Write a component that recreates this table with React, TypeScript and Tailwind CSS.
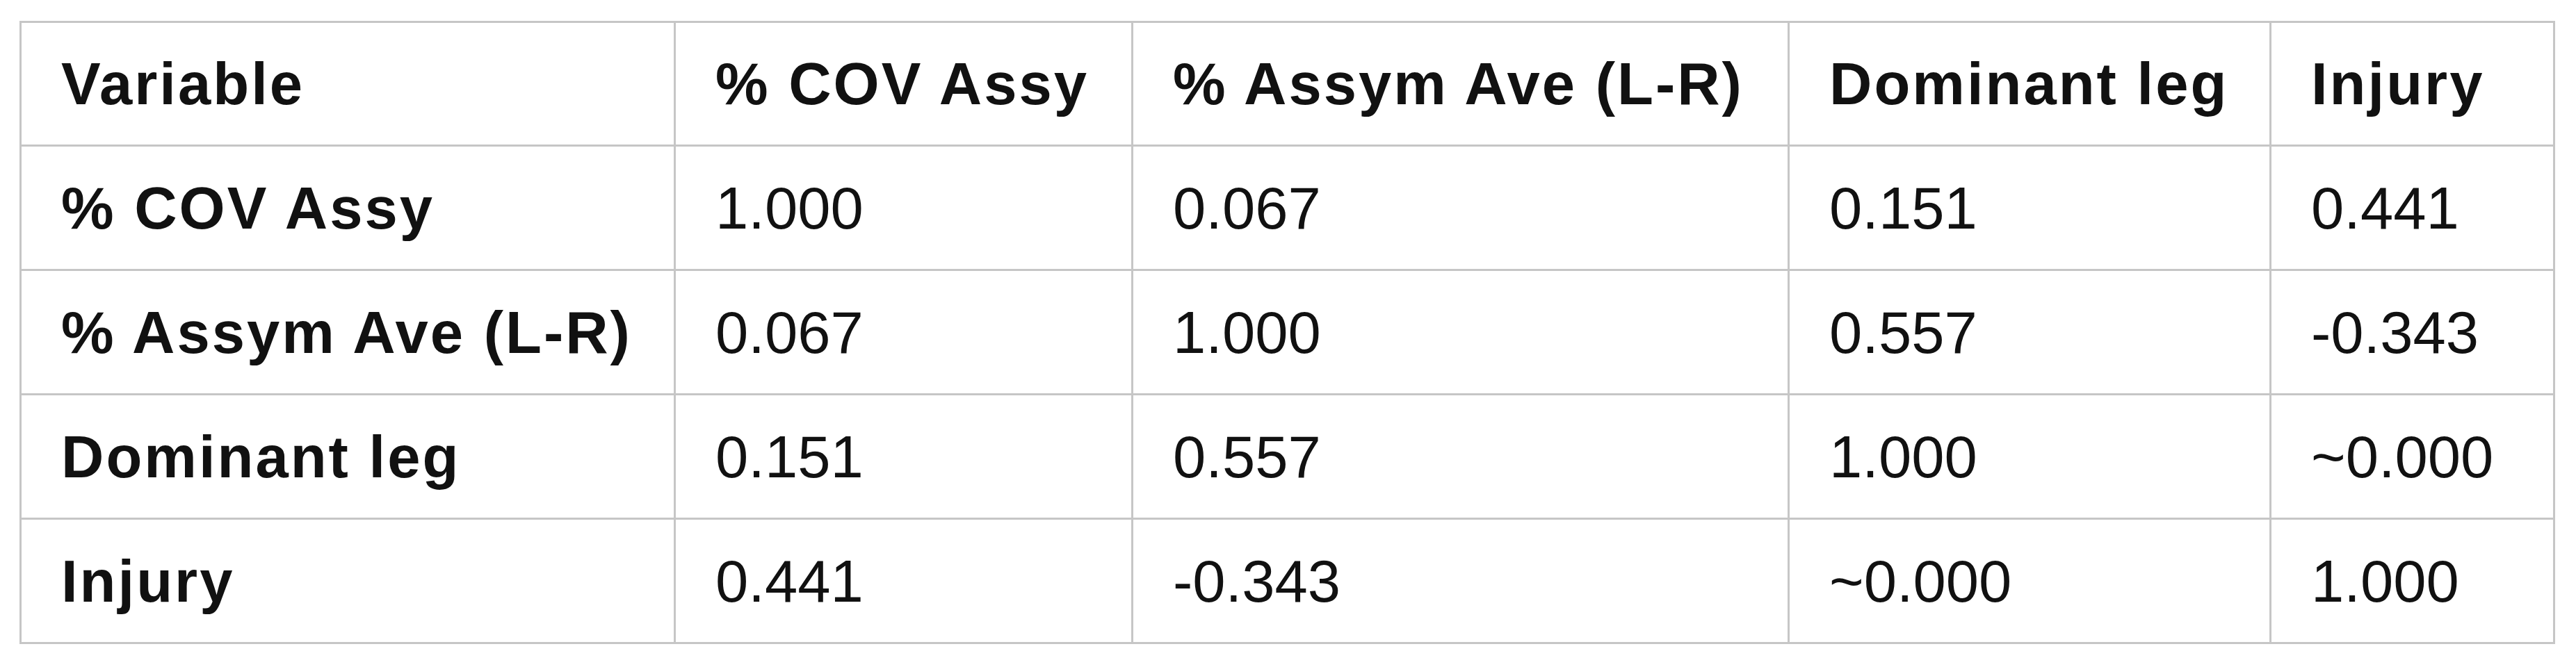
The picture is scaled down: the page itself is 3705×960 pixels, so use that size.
const cols = [941, 658, 944, 693, 408];

const header = ["Variable", "% COV Assy", "% Assym Ave (L-R)", "Dominant leg", "Injury"];

const rows: string[][] = [
  ["% COV Assy", "1.000", "0.067", "0.151", "0.441"],
  ["% Assym Ave (L-R)", "0.067", "1.000", "0.557", "-0.343"],
  ["Dominant leg", "0.151", "0.557", "1.000", "~0.000"],
  ["Injury", "0.441", "-0.343", "~0.000", "1.000"],
];

const cell = "border-[3px] border-[#c6c6c6] px-[57px] py-0 text-left align-middle whitespace-nowrap";

export default function App() {
  return (
    <div className="min-h-screen bg-white pl-[28px] pt-[30px] text-[#111] [font-family:'Liberation_Sans',Arial,sans-serif]">
      <table className="table-fixed border-collapse text-[85px] leading-none">
        <colgroup>
          {cols.map((w, i) => (
            <col key={i} style={{ width: w }} />
          ))}
        </colgroup>
        <thead>
          <tr className="h-[178px]">
            {header.map((h) => (
              <th key={h} className={`${cell} font-bold tracking-[3px]`}>
                {h}
              </th>
            ))}
          </tr>
        </thead>
        <tbody>
          {rows.map((r) => (
            <tr key={r[0]} className="h-[179px]">
              {r.map((v, i) => (
                <td key={i} className={`${cell} ${i === 0 ? "font-bold tracking-[3px]" : "font-normal"}`}>
                  {v}
                </td>
              ))}
            </tr>
          ))}
        </tbody>
      </table>
    </div>
  );
}
